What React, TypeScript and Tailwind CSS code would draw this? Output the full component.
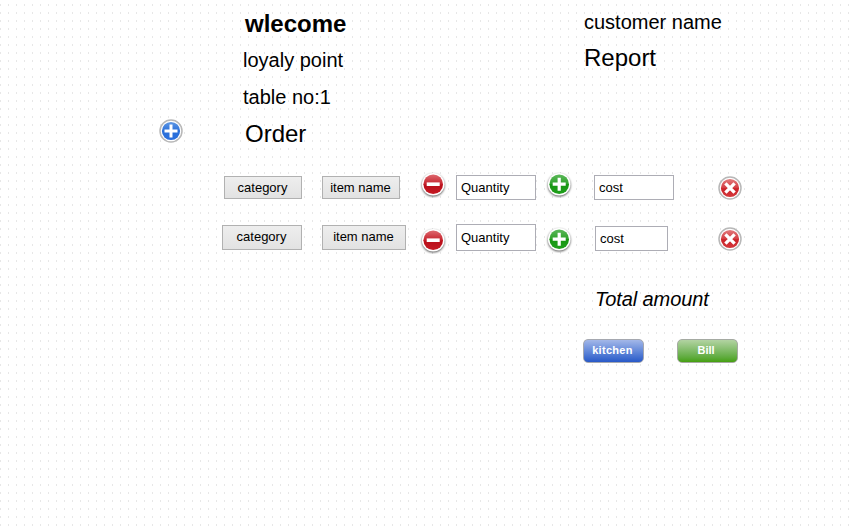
import type { ReactNode } from "react";

function Defs() {
  return (
    <svg className="block h-0 w-0" aria-hidden="true">
      <defs>
        <linearGradient id="green" x1="0" y1="0" x2="0" y2="1">
          <stop offset="0" stopColor="#5cb85a" />
          <stop offset="0.48" stopColor="#2fa22c" />
          <stop offset="0.52" stopColor="#169612" />
          <stop offset="1" stopColor="#20a01c" />
        </linearGradient>
        <linearGradient id="red" x1="0" y1="0" x2="0" y2="1">
          <stop offset="0" stopColor="#de6a70" />
          <stop offset="0.5" stopColor="#c5222c" />
          <stop offset="0.54" stopColor="#b90f1a" />
          <stop offset="1" stopColor="#c51a24" />
        </linearGradient>
        <linearGradient id="blue" x1="0" y1="0" x2="0" y2="1">
          <stop offset="0" stopColor="#6098e4" />
          <stop offset="0.5" stopColor="#2b70d9" />
          <stop offset="1" stopColor="#2a6fdd" />
        </linearGradient>
        <linearGradient id="cross" x1="0" y1="0" x2="0" y2="1">
          <stop offset="0" stopColor="#e27a7c" />
          <stop offset="0.48" stopColor="#d44045" />
          <stop offset="0.54" stopColor="#ca2228" />
          <stop offset="1" stopColor="#d5383c" />
        </linearGradient>
        <filter id="shade" x="-20%" y="-20%" width="150%" height="150%" colorInterpolationFilters="sRGB">
          <feDropShadow dx="0" dy="1" stdDeviation="1" floodColor="#000" floodOpacity="0.65" />
        </filter>
      </defs>
    </svg>
  );
}

function RoundIcon({ kind, className }: { kind: "plus" | "minus"; className: string }) {
  return (
    <svg viewBox="0 0 28 28" className={`h-7 w-7 shrink-0 ${className}`}>
      <circle cx="14.2" cy="14.2" r="11.3" fill="#fff" filter="url(#shade)" />
      <circle cx="14.2" cy="14.2" r="9.8" fill={kind === "plus" ? "url(#green)" : "url(#red)"} />
      {kind === "plus" ? (
        <path d="M14.2 7.7v13M7.7 14.2h13" stroke="#fff" strokeWidth="3.2" />
      ) : (
        <path d="M7.7 14.2h13" stroke="#fff" strokeWidth="3.6" />
      )}
    </svg>
  );
}

function RingIcon({ kind, className }: { kind: "add" | "remove"; className: string }) {
  return (
    <svg viewBox="0 0 24 24" className={`h-6 w-6 shrink-0 ${className}`}>
      <circle cx="12" cy="12" r="11" fill="#fff" stroke="#b8b8b8" strokeWidth="1.5" />
      <circle cx="12" cy="12" r="9.1" fill={kind === "add" ? "url(#blue)" : "url(#cross)"} />
      {kind === "add" ? (
        <path d="M12 5.5v13M5.5 12h13" stroke="#fff" strokeWidth="3" />
      ) : (
        <path d="M7.4 7.4l9.2 9.2M16.6 7.4l-9.2 9.2" stroke="#fff" strokeWidth="3.3" />
      )}
    </svg>
  );
}

function Choice({ children, className }: { children: ReactNode; className: string }) {
  return (
    <button
      className={`flex shrink-0 justify-center whitespace-nowrap border border-[#b1b1b1] bg-linear-to-b from-[#eeeeee] to-[#e2e2e2] pr-px text-[13px] leading-[21px] ${className}`}
    >
      {children}
    </button>
  );
}

function Field({ children, className }: { children: ReactNode; className: string }) {
  return (
    <div className={`shrink-0 border border-[#adadb5] bg-white pl-1 text-[13px] ${className}`}>
      {children}
    </div>
  );
}

export default function App() {
  return (
    <main className="h-[530px] w-[850px] overflow-hidden bg-[linear-gradient(to_bottom,#fff_4px,transparent_4px,transparent_6px,#fff_6px),linear-gradient(to_right,#e7e7e7_1px,#fff_1px)] bg-size-[8px_8px] font-['Liberation_Sans',Arial,sans-serif] text-black">
      <Defs />
      <header className="flex h-[172px] pt-3">
        <div className="w-[243px] shrink-0 pt-[107px] pl-[159px]">
          <RingIcon kind="add" className="" />
        </div>
        <div className="w-[341px] shrink-0">
          <h1 className="pl-0.5 text-2xl leading-6 font-bold">wlecome</h1>
          <p className="mt-3.5 text-xl leading-5">loyaly point</p>
          <p className="mt-[17px] text-xl leading-5">table no:1</p>
          <h2 className="mt-[15px] pl-0.5 text-2xl leading-6">Order</h2>
        </div>
        <div>
          <p className="text-xl leading-5">customer name</p>
          <p className="mt-3.5 text-2xl leading-6">Report</p>
        </div>
      </header>

      <section className="flex h-[52px] items-start pl-[224px]">
        <Choice className="mt-1 h-[23px] w-[78px]">category</Choice>
        <Choice className="mt-1 ml-5 h-[23px] w-[78px]">item name</Choice>
        <RoundIcon kind="minus" className="-mt-0.5 ml-[19px]" />
        <Field className="mt-[3px] ml-[9px] h-[25px] w-20 leading-[23px]">Quantity</Field>
        <RoundIcon kind="plus" className="-mt-0.5 ml-[9px]" />
        <Field className="mt-[3px] ml-[21px] h-[25px] w-20 leading-[23px]">cost</Field>
        <RingIcon kind="remove" className="mt-1 ml-11" />
      </section>

      <section className="flex h-[65px] items-start pl-[222px]">
        <Choice className="mt-px h-[25px] w-20">category</Choice>
        <Choice className="mt-px ml-5 h-[25px] w-[84px]">item name</Choice>
        <RoundIcon kind="minus" className="mt-0.5 ml-[13px]" />
        <Field className="ml-[9px] h-[27px] w-20 leading-[25px]">Quantity</Field>
        <RoundIcon kind="plus" className="mt-[1.4px] ml-[9px]" />
        <Field className="mt-0.5 ml-[22px] h-[25px] w-[73px] leading-[23px]">cost</Field>
        <RingIcon kind="remove" className="mt-[3px] ml-[50px]" />
      </section>

      <footer className="pl-[583px]">
        <p className="pl-3 text-xl leading-5 tracking-[-0.1px] italic">Total amount</p>
        <div className="mt-[30px] flex gap-[33px]">
          <button className="h-6 w-[61px] rounded-[5px] border border-[#a5a8b0] bg-linear-to-b from-[#a3b7e8] to-[#2859c8] pr-0.5 pb-0.5 text-[11px] leading-5 font-bold tracking-[0.3px] text-white">
            kitchen
          </button>
          <button className="h-6 w-[61px] rounded-[5px] border border-[#a5aaa2] bg-linear-to-b from-[#b2d3a2] to-[#45a009] pr-[3px] pb-0.5 text-[11px] leading-5 font-bold text-white">
            Bill
          </button>
        </div>
      </footer>
    </main>
  );
}
